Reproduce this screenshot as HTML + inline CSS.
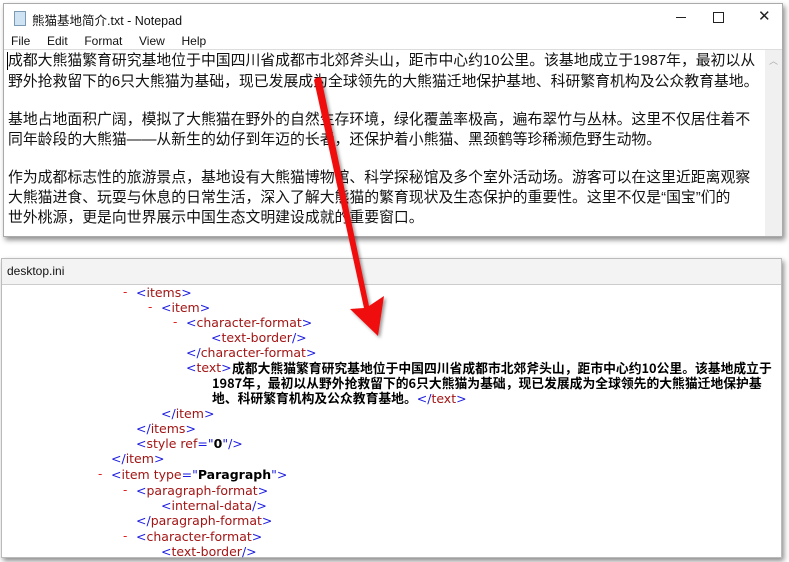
<!DOCTYPE html>
<html><head><meta charset="utf-8"><style>
*{margin:0;padding:0;box-sizing:border-box}
body{width:789px;height:562px;background:#fff;position:relative;overflow:hidden;font-family:"Liberation Sans","Noto Sans CJK SC",sans-serif}
.win1{position:absolute;left:3px;top:3px;width:780px;height:234px;background:#fff;border:1px solid #aaa;box-shadow:2px 3px 5px rgba(0,0,0,.45)}
.t{position:absolute;white-space:nowrap}
.np{font-size:14.85px;color:#111;left:4px}
.win2{position:absolute;left:1px;top:258px;width:781px;height:300px;background:#fff;border:1px solid #bbb;box-shadow:2px 3px 5px rgba(0,0,0,.45)}
.x{font-family:"DejaVu Sans","Noto Sans CJK SC",sans-serif;font-size:12.5px;color:#1a1ae0;position:absolute;white-space:nowrap;line-height:15px}
.r{color:#a31515}
.d{color:#e02020;position:absolute;font-family:"DejaVu Sans",sans-serif;font-size:12px;line-height:15px}
.b{font-weight:bold;color:#000}
.cj{font-family:"Noto Sans CJK SC",sans-serif;font-weight:bold;font-size:12.8px;color:#000;position:absolute;white-space:nowrap;line-height:15px}
</style></head><body>
<div class="win1">
 <div style="position:absolute;left:10px;top:7px;width:12px;height:15px;background:#cfe3f3;border:1px solid #7a9ab5"></div>
 <div class="t" style="left:28px;top:6px;font-size:12.5px;color:#111">熊猫基地简介.txt - Notepad</div>
 <div style="position:absolute;left:672px;top:13px;width:10px;height:1px;background:#222"></div>
 <div style="position:absolute;left:709px;top:8px;width:11px;height:11px;border:1px solid #222"></div>
 <div class="t" style="left:754px;top:3px;font-size:15px;color:#222">✕</div>
 <div class="t" style="left:7px;top:30px;font-size:12px;color:#111;word-spacing:5px">File &nbsp;Edit &nbsp;Format &nbsp;View &nbsp;Help</div>
 <div style="position:absolute;left:0;top:45px;width:778px;height:1px;background:#ddd"></div>
 <div style="position:absolute;left:761px;top:46px;width:17px;height:186px;background:#f0f0f0"></div>
 <div class="t" style="left:765px;top:50px;font-size:9px;color:#aaa">︿</div>
 <div style="position:absolute;left:3px;top:48px;width:1px;height:18px;background:#000"></div>
 <div class="t np" style="top:45px">成都大熊猫繁育研究基地位于中国四川省成都市北郊斧头山，距市中心约10公里。该基地成立于1987年，最初以从</div>
 <div class="t np" style="top:66px">野外抢救留下的6只大熊猫为基础，现已发展成为全球领先的大熊猫迁地保护基地、科研繁育机构及公众教育基地。</div>
 <div class="t np" style="top:104px">基地占地面积广阔，模拟了大熊猫在野外的自然生存环境，绿化覆盖率极高，遍布翠竹与丛林。这里不仅居住着不</div>
 <div class="t np" style="top:124px">同年龄段的大熊猫——从新生的幼仔到年迈的长者，还保护着小熊猫、黑颈鹤等珍稀濒危野生动物。</div>
 <div class="t np" style="top:162px">作为成都标志性的旅游景点，基地设有大熊猫博物馆、科学探秘馆及多个室外活动场。游客可以在这里近距离观察</div>
 <div class="t np" style="top:182px">大熊猫进食、玩耍与休息的日常生活，深入了解大熊猫的繁育现状及生态保护的重要性。这里不仅是“国宝”们的</div>
 <div class="t np" style="top:202px">世外桃源，更是向世界展示中国生态文明建设成就的重要窗口。</div>
</div>
<div class="win2">
 <div style="position:absolute;left:0;top:0;width:779px;height:26px;background:#f3f3f3;border-bottom:1px solid #ccc"></div>
 <div class="t" style="left:5px;top:5px;font-size:12px;color:#111">desktop.ini</div>
 <span class="d" style="left:121px;top:26px">-</span><span class="x" style="left:134px;top:26px">&lt;<span class="r">items</span>&gt;</span>
 <span class="d" style="left:146px;top:41px">-</span><span class="x" style="left:159px;top:41px">&lt;<span class="r">item</span>&gt;</span>
 <span class="d" style="left:171px;top:56px">-</span><span class="x" style="left:184px;top:56px">&lt;<span class="r">character-format</span>&gt;</span>
 <span class="x" style="left:209px;top:71px">&lt;<span class="r">text-border</span>/&gt;</span>
 <span class="x" style="left:184px;top:86px">&lt;/<span class="r">character-format</span>&gt;</span>
 <span class="x" style="left:184px;top:101px">&lt;<span class="r">text</span>&gt;</span>
 <span class="cj" style="left:230px;top:101px">成都大熊猫繁育研究基地位于中国四川省成都市北郊斧头山，距市中心约10公里。该基地成立于</span>
 <span class="cj" style="left:210px;top:116px">1987年，最初以从野外抢救留下的6只大熊猫为基础，现已发展成为全球领先的大熊猫迁地保护基</span>
 <span class="cj" style="left:210px;top:131px">地、科研繁育机构及公众教育基地。<span class="x" style="position:static;font-weight:normal">&lt;/<span class="r">text</span>&gt;</span></span>
 <span class="x" style="left:159px;top:147px">&lt;/<span class="r">item</span>&gt;</span>
 <span class="x" style="left:134px;top:162px">&lt;/<span class="r">items</span>&gt;</span>
 <span class="x" style="left:134px;top:177px">&lt;<span class="r">style ref</span>="<span class="b">0</span>"/&gt;</span>
 <span class="x" style="left:109px;top:192px">&lt;/<span class="r">item</span>&gt;</span>
 <span class="d" style="left:96px;top:208px">-</span><span class="x" style="left:109px;top:208px">&lt;<span class="r">item type</span>="<span class="b">Paragraph</span>"&gt;</span>
 <span class="d" style="left:121px;top:224px">-</span><span class="x" style="left:134px;top:224px">&lt;<span class="r">paragraph-format</span>&gt;</span>
 <span class="x" style="left:159px;top:239px">&lt;<span class="r">internal-data</span>/&gt;</span>
 <span class="x" style="left:134px;top:254px">&lt;/<span class="r">paragraph-format</span>&gt;</span>
 <span class="d" style="left:121px;top:270px">-</span><span class="x" style="left:134px;top:270px">&lt;<span class="r">character-format</span>&gt;</span>
 <span class="x" style="left:159px;top:285px">&lt;<span class="r">text-border</span>/&gt;</span>
</div>
<svg style="position:absolute;left:0;top:0" width="789" height="562">
 <defs><filter id="s"><feDropShadow dx="2" dy="2" stdDeviation="1.5" flood-opacity=".4"/></filter></defs>
 <polygon filter="url(#s)" fill="#f01010" points="316,78 321,77 369,306 384,296 378,336 350,309 364,308 314,80"/>
</svg>
</body></html>
